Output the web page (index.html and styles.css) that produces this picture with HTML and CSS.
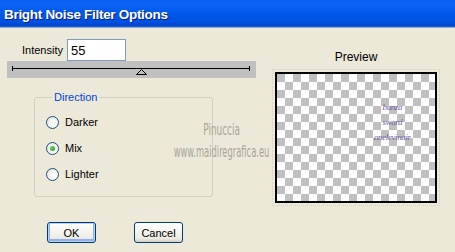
FILE: index.html
```html
<!DOCTYPE html>
<html lang="en">
<head>
    <meta charset="UTF-8">
    <title>Bright Noise Filter Options</title>
    <link rel="stylesheet" href="styles.css">
</head>
<body>
    <div class="window">
        <div class="titlebar">Bright Noise Filter Options</div>

        <div class="content">
            <!-- Colonne de gauche : réglages -->
            <div class="left">
                <div class="intensity-row">
                    <label class="intensity-label" for="intensity">Intensity</label>
                    <input class="intensity-input" id="intensity" type="text" value="55">
                </div>

                <div class="slider">
                    <svg width="249" height="16" viewBox="0 0 249 16">
                        <line x1="5" y1="6.5" x2="243" y2="6.5" stroke="#000" stroke-width="1"/>
                        <line x1="5.5" y1="4" x2="5.5" y2="9" stroke="#000" stroke-width="1"/>
                        <line x1="242.5" y1="4" x2="242.5" y2="9" stroke="#000" stroke-width="1"/>
                        <polygon points="134.5,7.5 139.5,12.5 129.5,12.5" fill="#c0c0c0" stroke="#000" stroke-width="1"/>
                    </svg>
                </div>

                <fieldset class="direction">
                    <legend>Direction</legend>
                    <div class="radio-row">
                        <span class="radio"></span>
                        <span class="radio-label">Darker</span>
                    </div>
                    <div class="radio-row">
                        <span class="radio checked"></span>
                        <span class="radio-label">Mix</span>
                    </div>
                    <div class="radio-row">
                        <span class="radio"></span>
                        <span class="radio-label">Lighter</span>
                    </div>
                </fieldset>

                <div class="buttons">
                    <button class="btn default">OK</button>
                    <button class="btn">Cancel</button>
                </div>
            </div>

            <!-- Colonne de droite : aperçu -->
            <div class="right">
                <div class="preview-label">Preview</div>
                <div class="preview">
                    <div class="preview-text">
                        <span>bunza</span>
                        <span>sward</span>
                        <span>anelevinair</span>
                    </div>
                </div>
            </div>
        </div>

        <!-- Filigrane -->
        <div class="watermark">
            <span class="wm-name">Pinuccia</span>
            <span class="wm-url">www.maidiregrafica.eu</span>
        </div>
    </div>
</body>
</html>
```

FILE: styles.css
```css
:root {
  --face: #ece9d8;
  --xp-blue: #0054e3;
}

* {
  box-sizing: border-box;
}

body {
  margin: 0;
  background: var(--face);
  font-family: "Liberation Sans", Arial, sans-serif;
  font-size: 11px;
  color: #000;
}

.window {
  position: relative; /* pour le filigrane */
  width: 455px;
  height: 252px;
  overflow: hidden;
}

/* Barre de titre façon XP */
.titlebar {
  height: 28px;
  padding-left: 4px;
  line-height: 29px;
  color: #fff;
  font-weight: bold;
  font-size: 13.5px;
  letter-spacing: -0.3px;
  text-shadow: 1px 1px 0 #0a1f7d;
  background: linear-gradient(#0a5ff0 0%, #0b64f4 15%, #0158e8 50%, #0050e0 80%, #0044c8 92%, #2b6fd6 96%, #d8d4c4 100%);
}

.content {
  display: flex;
}

.left {
  width: 256px;
  padding-left: 7px;
}

.intensity-row {
  display: flex;
  align-items: center;
  margin-top: 11px;
  margin-left: 15px;
}

.intensity-label {
  width: 45px;
}

.intensity-input {
  width: 59px;
  height: 22px;
  margin: 0;
  padding: 1px 3px 0;
  border: 1px solid #7f9db9;
  background: #fff;
  font-family: "Liberation Sans", Arial, sans-serif;
  font-size: 13px;
}

.slider {
  height: 17px;
  padding-top: 1px;
  background: #c0c0c0;
}

.slider svg {
  display: block;
}

/* Groupe Direction */
.direction {
  width: 179px;
  height: 106px;
  margin: 13px 0 0 27px;
  padding: 0 0 0 11px;
  border: 1px solid #d0d0bf;
  border-radius: 3px;
}

.direction legend {
  margin-left: 6px;
  padding: 0 2px;
  color: #0046d5;
  font-size: 11px;
  line-height: 13px;
}

.radio-row {
  display: flex;
  align-items: center;
  height: 26px;
}

.radio-row:first-of-type {
  margin-top: 5px;
}

.radio {
  position: relative;
  width: 13px;
  height: 13px;
  margin-right: 6px;
  border: 1px solid #1c5180;
  border-radius: 50%;
  background: radial-gradient(circle at 65% 65%, #fff 0%, #f4f3ee 50%, #dcdbd0 100%);
}

.radio.checked:after {
  content: '';
  position: absolute;
  left: 3px;
  top: 3px;
  width: 5px;
  height: 5px;
  border-radius: 50%;
  background: radial-gradient(circle at 40% 40%, #5fd35f, #21a121);
}

.buttons {
  display: flex;
  gap: 38px;
  margin: 25px 0 0 40px;
}

.btn {
  width: 49px;
  height: 21px;
  padding: 0;
  border: 1px solid #003c74;
  border-radius: 3px;
  background: linear-gradient(#ffffff 0%, #f6f5f0 40%, #ecebe4 80%, #d6d0c5 100%);
  font-family: "Liberation Sans", Arial, sans-serif;
  font-size: 11px;
  color: #000;
}

.btn.default {
  box-shadow: inset 0 0 0 1px #b9d1f4, inset 0 -1px 0 2px #8fb1ea;
}

/* Aperçu */
.right {
  margin-left: 19px;
}

.preview-label {
  margin-top: 22px;
  height: 22px;
  text-align: center;
  font-size: 12px;
}

.preview {
  position: relative;
  width: 162px;
  height: 131px;
  border: 2px solid #000;
  outline: 1px dotted #d6d2c0;
  outline-offset: 2px;
  background-color: #fff;
  background-image:
    linear-gradient(45deg, #c0c0c0 25%, transparent 25%, transparent 75%, #c0c0c0 75%),
    linear-gradient(45deg, #c0c0c0 25%, transparent 25%, transparent 75%, #c0c0c0 75%);
  background-size: 16px 16px;
  background-position: 8px 0, 0 8px;
}

.preview-text {
  position: absolute;
  left: 97px;
  top: 29px;
  display: flex;
  flex-direction: column;
  align-items: center;
  gap: 6px;
  color: #7563a6;
  font-family: "Liberation Serif", serif;
  font-style: italic;
  font-size: 9px;
  line-height: 9px;
  letter-spacing: -0.4px;
}

/* Filigrane par-dessus la boîte */
.watermark {
  position: absolute;
  left: 168px;
  top: 121px;
  width: 107px;
  display: flex;
  flex-direction: column;
  align-items: center;
  color: #a9a598;
  font-family: "DejaVu Sans Condensed", "DejaVu Sans", sans-serif;
  pointer-events: none;
}

.wm-name {
  font-size: 16px;
  line-height: 18px;
  transform: scaleX(0.62);
}

.wm-url {
  margin-top: 4px;
  font-size: 16px;
  line-height: 17px;
  white-space: nowrap;
  transform: scaleX(0.58);
}
```
